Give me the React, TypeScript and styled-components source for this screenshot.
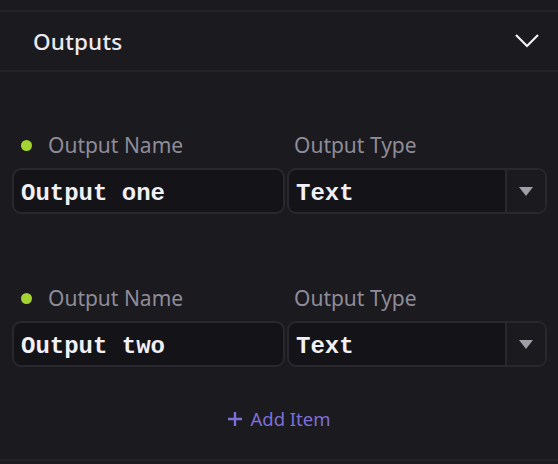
import React from "react";
import styled, { createGlobalStyle } from "styled-components";

const Global = createGlobalStyle`
  html, body { margin: 0; padding: 0; background: #1b1a1f; }
  body { font-family: "Noto Sans", sans-serif; }
`;

const Page = styled.div`
  width: 558px;
  height: 464px;
  padding-top: 10px;
  box-sizing: border-box;
  background: #1b1a1f;
`;

const Section = styled.section`
  border-top: 2px solid #232228;
  border-bottom: 2px solid #232228;
  height: 451px;
  box-sizing: border-box;
  display: flex;
  flex-direction: column;
`;

const Header = styled.div`
  height: 58px;
  display: flex;
  align-items: center;
  justify-content: space-between;
  padding: 0 18px 0 33px;
  border-bottom: 2px solid #232228;
`;

const Title = styled.h2`
  margin: 0;
  font-size: 22.5px;
  font-weight: 500;
  color: #ecebf0;
  letter-spacing: 0.2px;
`;

const Body = styled.div`
  display: flex;
  flex-direction: column;
  padding: 59px 11px 0 12px;
  gap: 70px;
`;

const Item = styled.div`
  display: grid;
  grid-template-columns: 273px 260px;
  column-gap: 2px;
  row-gap: 9px;
`;

const Label = styled.div<{ $dot?: boolean }>`
  display: flex;
  align-items: center;
  gap: 16px;
  height: 28px;
  padding-left: ${(p) => (p.$dot ? "9px" : "7px")};
  font-size: 21px;
  color: #8e8c98;
`;

const Dot = styled.span`
  width: 11px;
  height: 11px;
  border-radius: 50%;
  background: #a4d431;
`;

const Field = styled.div`
  height: 46px;
  box-sizing: border-box;
  border: 2px solid #29282e;
  border-radius: 9px;
  background: #141317;
  display: flex;
  align-items: center;
  overflow: hidden;
`;

const Value = styled.span`
  flex: 1;
  padding: 4px 0 0 7px;
  font-family: "Liberation Mono", "Courier New", monospace;
  font-weight: 700;
  font-size: 24px;
  color: #f1f0f4;
`;

const Caret = styled.div`
  width: 38px;
  align-self: stretch;
  border-left: 2px solid #29282e;
  background: #1b1a1f;
  display: flex;
  align-items: center;
  justify-content: center;
`;

const AddButton = styled.button`
  align-self: center;
  margin-top: -31px;
  height: 25px;
  background: none;
  border: none;
  display: flex;
  align-items: center;
  gap: 8px;
  color: #7d6fd8;
  font-family: "Noto Sans", sans-serif;
  font-size: 18.5px;
  padding: 0;
  cursor: pointer;
`;

const Chevron = () => (
  <svg width="26" height="16" viewBox="0 0 26 16">
    <path d="M2 2 L13 13 L24 2" fill="none" stroke="#f2f1f5" strokeWidth="2.2" />
  </svg>
);

const Tri = () => (
  <svg width="14" height="9" viewBox="0 0 14 9">
    <path d="M0 0 H14 L7 9 Z" fill="#a09ea8" />
  </svg>
);

const Plus = () => (
  <svg width="14" height="14" viewBox="0 0 14 14">
    <path d="M7 0 V14 M0 7 H14" stroke="#7d6fd8" strokeWidth="2.4" />
  </svg>
);

const outputs = ["Output one", "Output two"];

export default function App() {
  return (
    <Page>
      <Global />
      <Section>
        <Header>
          <Title>Outputs</Title>
          <Chevron />
        </Header>
        <Body>
          {outputs.map((name) => (
            <Item key={name}>
              <Label $dot>
                <Dot />
                Output Name
              </Label>
              <Label>Output Type</Label>
              <Field>
                <Value>{name}</Value>
              </Field>
              <Field>
                <Value>Text</Value>
                <Caret>
                  <Tri />
                </Caret>
              </Field>
            </Item>
          ))}
          <AddButton>
            <Plus />
            Add Item
          </AddButton>
        </Body>
      </Section>
    </Page>
  );
}
